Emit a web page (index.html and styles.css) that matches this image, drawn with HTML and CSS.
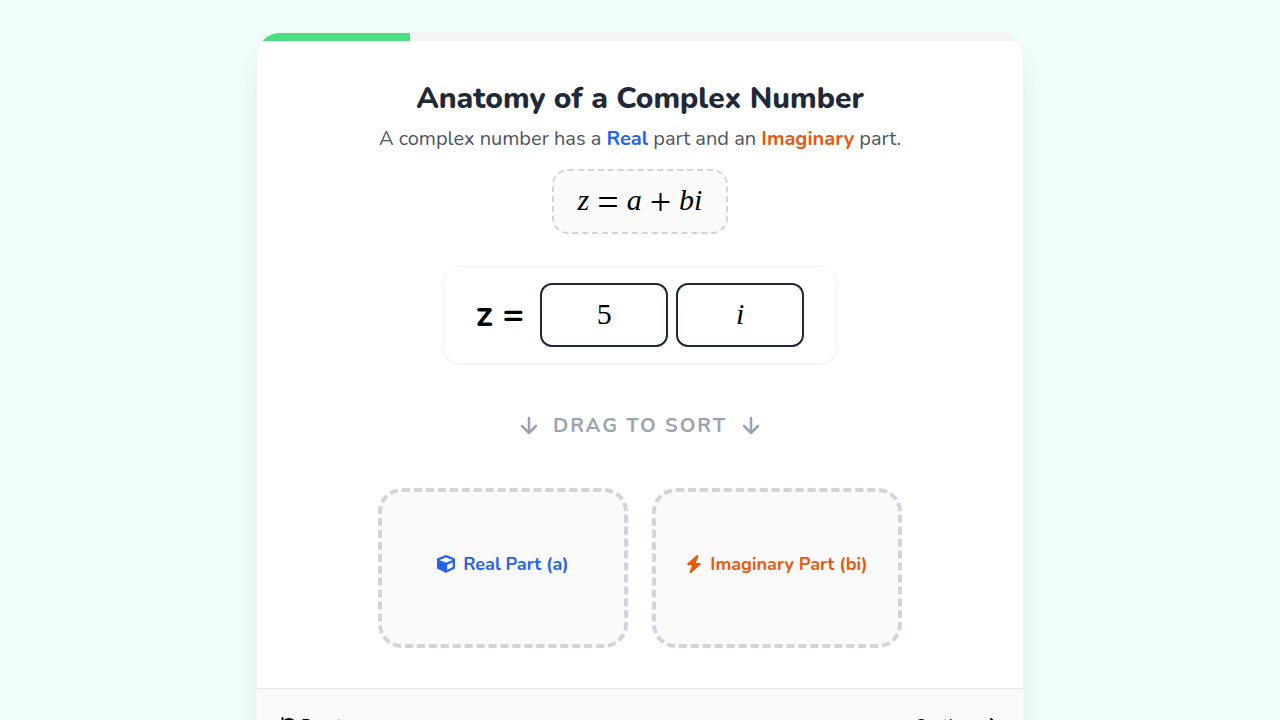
FILE: index.html
```
<!DOCTYPE html>
<html lang="en">
  <head>
    <title>Anatomy of a Complex Number</title>
    <meta charset="utf-8">
    <meta name="viewport" content="width=device-width, initial-scale=1">
    <link rel="stylesheet" href="styles.css">
  </head>
  <body>
    <main class="card">
      <div class="progress"><div class="progress-bar" style="width: 20%"></div></div>

      <div class="content">
        <h1>Anatomy of a Complex Number</h1>
        <p class="intro">A complex number has a <strong class="real">Real</strong> part and an <strong class="imag">Imaginary</strong> part.</p>

        <div class="formula">
          <i>z</i><span class="op">=</span><i>a</i><span class="op">+</span><i>bi</i>
        </div>

        <div class="equation">
          <span class="lead">z =</span>
          <div class="tiles">
            <div class="tile" draggable="true">5</div>
            <div class="tile" draggable="true"><i>i</i></div>
          </div>
        </div>

        <div class="hint">
          <svg class="arrow" viewBox="0 0 18 20"><path d="M9 2v15M2 10l7 7 7-7"/></svg>
          <span>DRAG TO SORT</span>
          <svg class="arrow" viewBox="0 0 18 20"><path d="M9 2v15M2 10l7 7 7-7"/></svg>
        </div>

        <div class="zones">
          <div class="zone real">
            <svg class="cube" viewBox="0 0 512 512"><path d="M239.100 6.300l-208 78c-18.700 7-31.100 25-31.100 45v225.100c0 18.200 10.300 34.800 26.500 42.900l208 104c13.500 6.800 29.400 6.800 42.900 0l208-104c16.300-8.100 26.500-24.800 26.500-42.900V129.300c0-20-12.400-37.900-31.100-44.900l-208-78C262 2.200 250 2.200 239.100 6.300zM256 68.400l192 72v1.100l-192 78-192-78v-1.100l192-72zm32 356V275.500l160-65v133.900l-160 80z"/></svg>
            <span>Real Part (a)</span>
          </div>
          <div class="zone imag">
            <svg class="bolt" viewBox="0 0 448 512"><path d="M349.400 44.600c5.900-13.700 1.500-29.700-10.600-38.500s-28.600-8-39.900 1.800l-256 224c-10 8.800-13.600 22.900-8.900 35.300S50.700 288 64 288H175.500L98.600 467.400c-5.900 13.700-1.500 29.700 10.600 38.500s28.600 8 39.900-1.800l256-224c10-8.800 13.600-22.900 8.900-35.300s-16.600-20.700-30-20.700H272.500L349.400 44.600z"/></svg>
            <span>Imaginary Part (bi)</span>
          </div>
        </div>
      </div>

      <footer class="footer">
        <button type="button" class="nav-btn">
          <svg class="nav-icon" viewBox="0 0 16 16"><path d="M1.500 1v5h5M2 6a6.500 6.500 0 1 1 0 5"/></svg>
          Reset
        </button>
        <button type="button" class="nav-btn">
          Continue
          <svg class="nav-icon" viewBox="0 0 16 16"><path d="M1 8h13M8 2l6 6-6 6"/></svg>
        </button>
      </footer>
    </main>
  </body>
</html>
```
FILE: styles.css
```
* {
  box-sizing: border-box;
}
body {
  margin: 0;
  padding: 32px 16px;
  background: #f0fdfa;
  color: #000;
  font-family: Nunito, "Open Sans", "Noto Sans", sans-serif;
}
h1, p {
  margin: 0;
}
.card {
  max-width: 768px;
  margin: 0 auto;
  background: #fff;
  border: 1px solid #f3f4f6;
  border-radius: 24px;
  overflow: hidden;
  box-shadow: 0 20px 25px -5px rgba(0, 0, 0, 0.1), 0 8px 10px -6px rgba(0, 0, 0, 0.1);
}
.progress {
  height: 8px;
  background: #f3f4f6;
}
.progress-bar {
  height: 100%;
  background: #4ade80;
}
.content {
  display: flex;
  flex-direction: column;
  align-items: center;
  padding: 40px 32px;
}
h1 {
  color: #1f2937;
  font-size: 30px;
  font-weight: 800;
  line-height: 36px;
}
.intro {
  margin-top: 8px;
  color: #4b5563;
  font-size: 20px;
  line-height: 28px;
}
.real {
  color: #2563eb;
}
.imag {
  color: #ea580c;
}

/* formula */
.formula {
  display: flex;
  align-items: center;
  gap: 8px;
  margin-top: 16px;
  padding: 12px 24px 16px;
  border: 2px dashed #d1d5db;
  border-radius: 16px;
  background: #fafafa;
  font-family: "Liberation Serif", serif;
  font-size: 30px;
  line-height: 33px;
}
.op {
  padding-top: 4px;
  font-size: 38px;
  line-height: 28px;
}

/* draggable tiles */
.equation {
  display: flex;
  align-items: center;
  gap: 16px;
  margin-top: 32px;
  padding: 16px 32px;
  border: 1px solid #f3f4f6;
  border-radius: 16px;
  box-shadow: 0 1px 2px rgba(0, 0, 0, 0.05);
}
.lead {
  font-size: 36px;
  font-weight: 700;
  line-height: 40px;
}
.tiles {
  display: flex;
  gap: 8px;
}
.tile {
  display: flex;
  align-items: center;
  justify-content: center;
  width: 128px;
  height: 64px;
  padding-bottom: 2px;
  border: 2px solid #1f2937;
  border-radius: 12px;
  font-family: "Liberation Serif", serif;
  font-size: 30px;
  cursor: grab;
}

.hint {
  display: flex;
  align-items: center;
  gap: 15px;
  margin-top: 48px;
  color: #9ca3af;
  font-size: 20px;
  font-weight: 700;
  line-height: 28px;
  letter-spacing: 2px;
}
.arrow {
  width: 18px;
  height: 20px;
  fill: none;
  stroke: currentColor;
  stroke-width: 2.5;
  stroke-linecap: round;
  stroke-linejoin: round;
}

/* drop zones */
.zones {
  display: grid;
  grid-template-columns: 1fr 1fr;
  gap: 24px;
  width: 100%;
  max-width: 524px;
  margin-top: 48px;
}
.zone {
  display: flex;
  align-items: center;
  justify-content: center;
  gap: 8px;
  min-height: 160px;
  padding-bottom: 8px;
  border: 4px dashed #d1d5db;
  border-radius: 24px;
  background: #fafafa;
  font-size: 18px;
  font-weight: 700;
}
.cube {
  width: 18px;
  height: 18px;
  fill: currentColor;
}
.bolt {
  width: 16px;
  height: 18px;
  fill: currentColor;
}

.footer {
  display: flex;
  justify-content: space-between;
  padding: 24px;
  border-top: 1px solid #e5e7eb;
  background: #fafafa;
}
.nav-btn {
  display: flex;
  align-items: center;
  gap: 4px;
  padding: 0;
  border: 0;
  background: none;
  color: #000;
  font: inherit;
  font-size: 16px;
  line-height: 24px;
  cursor: pointer;
}
.nav-icon {
  width: 16px;
  height: 16px;
  fill: none;
  stroke: currentColor;
  stroke-width: 2;
  stroke-linecap: round;
  stroke-linejoin: round;
}
```
